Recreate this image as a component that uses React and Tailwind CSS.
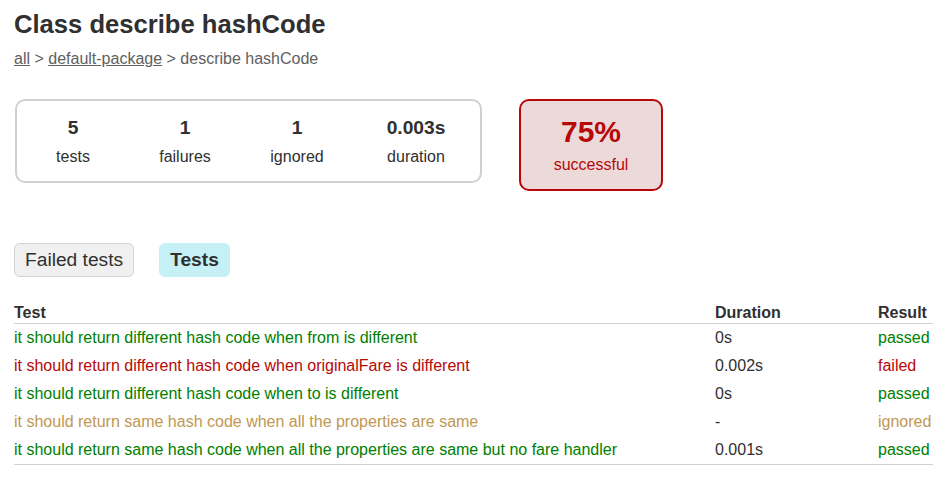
export default function App() {
  const rows = [
    ["it should return different hash code when from is different", "0s", "passed", "text-[#008000]"],
    ["it should return different hash code when originalFare is different", "0.002s", "failed", "text-[#b60808]"],
    ["it should return different hash code when to is different", "0s", "passed", "text-[#008000]"],
    ["it should return same hash code when all the properties are same", "-", "ignored", "text-[#c09853]"],
    ["it should return same hash code when all the properties are same but no fare handler", "0.001s", "passed", "text-[#008000]"],
  ];
  const stats = [
    ["5", "tests", "w-[112px]"],
    ["1", "failures", "w-[112px]"],
    ["1", "ignored", "w-[112px]"],
    ["0.003s", "duration", "w-[126px]"],
  ];
  return (
    <div className="font-['Liberation_Sans',Arial,sans-serif] text-[16px] text-[#303030] px-[14px] pt-[9px] bg-white min-h-[478px]">
      <h1 className="text-[25.6px] font-bold leading-[30px]">Class describe hashCode</h1>
      <div className="mt-[10px] leading-[20px] text-[#606060]">
        <a className="underline">all</a> &gt; <a className="underline">default-package</a> &gt; describe hashCode
      </div>
      <div className="mt-[30px] flex items-start pl-[1px]">
        <div className="flex border-2 border-[#d0d0d0] rounded-[10px] h-[84px] w-[467px]">
          {stats.map(([n, l, w]) => (
            <div key={l} className={`${w} pt-[15px] text-center`}>
              <div className="text-[19.2px] font-bold leading-[23px]">{n}</div>
              <div className="mt-[8px] leading-[19px]">{l}</div>
            </div>
          ))}
        </div>
        <div className="ml-[37px] w-[144px] h-[92px] border-2 border-[#b60808] bg-[#ecdada] rounded-[10px] pt-[15px] text-center text-[#b60808]">
          <div className="text-[30px] font-bold leading-[32px]">75%</div>
          <div className="mt-[8px] leading-[18px]">successful</div>
        </div>
      </div>
      <div className="mt-[52px] flex">
        <div className="border border-[#d4d4d4] bg-[#f0f0f0] rounded-[6px] px-[10px] py-[5px] text-[19.2px] leading-[22px] mr-[25px]">Failed tests</div>
        <div className="border border-[#c5f0f5] bg-[#c5f0f5] rounded-[6px] px-[10px] py-[5px] text-[19.2px] leading-[22px] font-bold">Tests</div>
      </div>
      <div className="mt-[18px] w-[919px]">
        <div className="grid grid-cols-[701px_163px_1fr] border-b border-[#d0d0d0] h-[29px] pt-[9px] leading-[18px] font-bold">
          <div>Test</div>
          <div>Duration</div>
          <div>Result</div>
        </div>
        <div className="border-b border-[#d0d0d0]">
          {rows.map(([name, d, r, c]) => (
            <div key={name} className="grid grid-cols-[701px_163px_1fr] h-[28px] items-center leading-[18px]">
              <div className={c}>{name}</div>
              <div>{d}</div>
              <div className={c}>{r}</div>
            </div>
          ))}
        </div>
      </div>
    </div>
  );
}
